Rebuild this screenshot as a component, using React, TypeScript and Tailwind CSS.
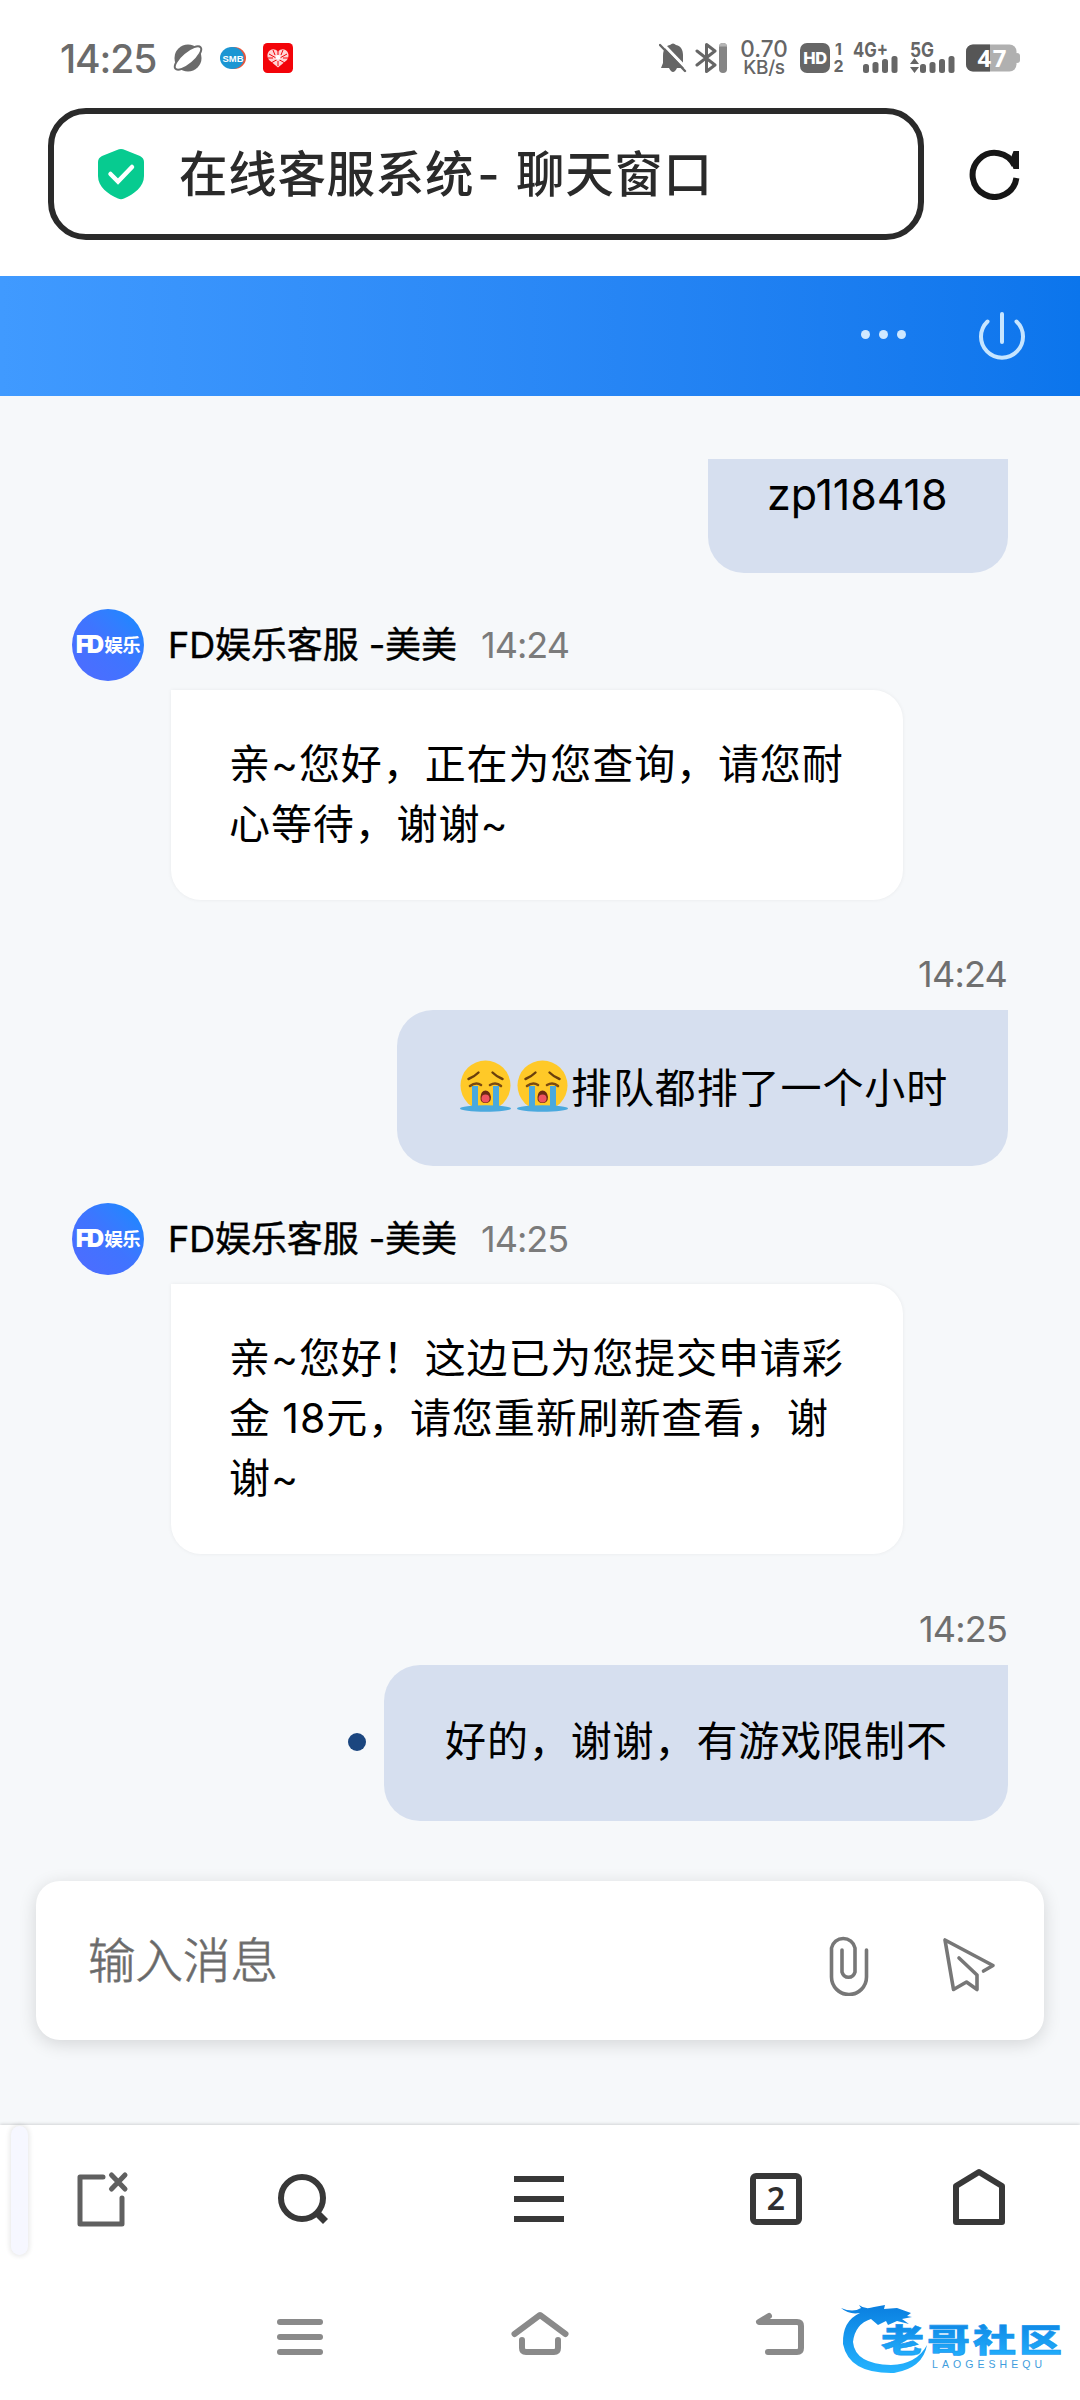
import React from "react";

const Planet = () => (
  <svg className="ml-[17px] h-[30px] w-[32px]" viewBox="0 0 32 30">
    <circle cx="16" cy="15" r="13.5" fill="#6b6b6b" />
    <ellipse cx="16" cy="15" rx="16.5" ry="6.2" fill="#fff" stroke="#6b6b6b" strokeWidth="2" transform="rotate(-40 16 15)" />
  </svg>
);

const AppBadges = () => (
  <svg className="ml-[15px] h-[32px] w-[76px]" viewBox="0 0 76 32">
    <ellipse cx="15" cy="16" rx="12" ry="11" fill="#e8553b" />
    <ellipse cx="13" cy="16" rx="12" ry="11" fill="#1b96d3" />
    <text x="3.5" y="19.5" fontSize="9.5" fontWeight="700" fill="#fff" textLength="21" lengthAdjust="spacingAndGlyphs" fontFamily="Liberation Sans, sans-serif">SMB</text>
    <rect x="44" y="1" width="30" height="30" rx="4.5" fill="#f30309" />
    <path d="M59 25.500 L50 18 C45 11 53 3.500 59 9.500 C65 3.500 73 11 68 18 Z" fill="#ffd4d4" />
    <path d="M50 12 L66 21 M68 12 L52 21 M59 9 V13 M59 19 V24 M54 8 L56 13 M64 8 L62 13 M49 16 H54 M64 16 H69" stroke="#f30309" strokeWidth="1" />
    <circle cx="59" cy="15.5" r="2.5" fill="#fff" />
  </svg>
);

const BellOff = () => (
  <svg className="h-[32px] w-[29px]" viewBox="0 0 29 32">
    <path d="M2 26 L4 21 V14 C4 6 8 3.500 11 3 Q14 0 17 3 C22 4 24 8 24 13 V22 L26 26 H18 Q14 34 10 26 Z" fill="#666" />
    <path d="M3 1 L29 28" stroke="#fff" strokeWidth="3" />
    <path d="M1 3 L26 29" stroke="#666" strokeWidth="2.400" strokeLinecap="round" />
  </svg>
);

const Bluetooth = () => (
  <svg className="ml-[7px] h-[32px] w-[33px]" viewBox="0 0 33 32">
    <path d="M2 9 L20 23 L11.500 29.500 V2.500 L20 9 L2 23" fill="none" stroke="#666" strokeWidth="3" strokeLinejoin="round" strokeLinecap="round" />
    <rect x="24" y="1" width="8" height="30" rx="4" fill="#858585" />
    <path d="M24 4.500 a4 3.500 0 0 1 8 0z" fill="#b5b5b5" />
  </svg>
);

const Signal = ({ label, arrows }: { label: string; arrows?: boolean }) => (
  <svg className="h-[34px] w-[46px] overflow-visible" viewBox="0 0 46 34">
    <text x="0" y="16" fontSize="20" fontWeight="700" fill="#666" textLength={label.length > 2 ? 35 : 24} lengthAdjust="spacingAndGlyphs" fontFamily="Inter, sans-serif">{label}</text>
    <rect x="10" y="23" width="6" height="9" rx="2.500" fill="#666" />
    <rect x="19.500" y="21" width="6" height="11" rx="2.500" fill="#666" />
    <rect x="29" y="18" width="6" height="14" rx="2.500" fill="#666" />
    <rect x="38.500" y="15" width="6" height="17" rx="2.500" fill="#666" />
    {arrows && <path d="M0 23 L4.500 17 L9 23Z M0 26 L4.500 32 L9 26Z" fill="#666" />}
  </svg>
);

const Battery = () => (
  <svg className="ml-[10px] mr-[-1px] h-[28px] w-[55px] overflow-visible" viewBox="0 0 55 28">
    <rect x="48" y="9" width="6" height="10" rx="3" fill="#b0b0b0" />
    <rect x="0" y="0.500" width="50.500" height="27" rx="7" fill="#b0b0b0" />
    <path d="M7 0.500 H24 V27.500 H7 A7 7 0 0 1 0 20.500 V7.500 A7 7 0 0 1 7 0.500Z" fill="#565656" />
    <text x="11.500" y="22.500" fontSize="24" fontWeight="700" fill="#fff" textLength="29" fontFamily="Noto Sans, sans-serif">47</text>
  </svg>
);

const StatusBar = () => (
  <div className="flex h-[108px] items-start justify-between pl-[60px] pr-[60px]">
    <div className="mt-[40px] flex h-[36px] items-center text-[#6b6b6b]">
      <span className="w-[95px] whitespace-nowrap text-[39px] font-medium leading-none tracking-[-1.100px]">14:25</span>
      <Planet />
      <AppBadges />
    </div>
    <div className="mt-[40px] flex h-[36px] items-center text-[#666]">
      <BellOff />
      <Bluetooth />
      <div className="ml-[12px] flex w-[48px] flex-col items-center whitespace-nowrap">
        <span className="text-[22.500px] font-medium leading-[18px]">0.70</span>
        <span className="text-[19px] font-medium leading-[19px] tracking-[-0.300px]">KB/s</span>
      </div>
      <span className="ml-[12px] flex h-[30px] w-[30px] items-center justify-center rounded-[7px] bg-[#666] text-[16.500px] font-extrabold leading-none tracking-[-0.500px] text-white">HD</span>
      <div className="ml-[3px] flex w-[11px] flex-col items-center text-[16px] font-bold leading-[17px]">
        <span>1</span>
        <span>2</span>
      </div>
      <div className="ml-[9px] flex gap-[11px]">
        <Signal label="4G+" />
        <Signal label="5G" arrows />
      </div>
      <Battery />
    </div>
  </div>
);

const AddressBar = () => (
  <div className="flex h-[168px] items-start pl-[48px]">
    <div className="flex h-[132px] w-[876px] items-center rounded-[38px] border-[6px] border-[#2a2a2a] pl-[44px]">
      <svg className="h-[52px] w-[46px]" viewBox="0 0 46 52">
        <path d="M19 2 Q23 0 27 2 L42 8 Q46 10 46 14 V28 C46 39 36 46 26 50.500 Q23 52 20 50.500 C10 46 0 39 0 28 V14 Q0 10 4 8 Z" fill="#07cb90" />
        <path d="M12.500 26 L20 33.500 L34 19" fill="none" stroke="#fff" strokeWidth="4.500" strokeLinecap="round" />
      </svg>
      <span className="ml-[35px] mt-[3px] whitespace-pre text-[48.500px] font-medium leading-none tracking-[0.700px] text-[#2a2a2a]">
        在线客服系统<span className="pl-[3px] pr-[2px]">- </span>聊天窗口
      </span>
    </div>
    <svg className="ml-[45px] mt-[40px] h-[52px] w-[52px]" viewBox="0 0 52 52">
      <path d="M45.500 17.500 A22 22 0 1 0 47.400 30" fill="none" stroke="#161616" strokeWidth="6" />
      <path d="M44.500 3 H50 V21 H44.500 L41 12Z" fill="#161616" />
    </svg>
  </div>
);

const ChatHeader = () => (
  <div className="flex h-[120px] items-center justify-end bg-gradient-to-r from-[#409aff] to-[#0b75ec] pr-[54px]">
    <div className="mr-[71px] mt-[-3px] flex gap-[9px]">
      <i className="h-[9px] w-[9px] rounded-full bg-[#cfe8ff]" />
      <i className="h-[9px] w-[9px] rounded-full bg-[#cfe8ff]" />
      <i className="h-[9px] w-[9px] rounded-full bg-[#cfe8ff]" />
    </div>
    <svg className="mt-[-2px] h-[50px] w-[49px]" viewBox="0 0 49 50" fill="none" stroke="#c6e5ff" strokeWidth="4" strokeLinecap="round">
      <path d="M10.500 11.500 A21 21 0 1 0 39.500 11.500" />
      <path d="M25 4 V32" />
    </svg>
  </div>
);

const Sob = () => (
  <svg className="mt-[-5px] h-[52px] w-[51px] shrink-0" viewBox="0 0 51 52">
    <circle cx="25.500" cy="25.500" r="25" fill="#ffc928" />
    <ellipse cx="25.500" cy="48.500" rx="25.500" ry="3.300" fill="#4aa9de" />
    <path d="M12 26 H18 V47 H12Z M33 26 H39 V47 H33Z" fill="#4aa9de" />
    <path d="M10 26 Q16 21.500 21 25 M30 25 Q36 21.500 41 26" fill="none" stroke="#7a4a10" strokeWidth="2.600" strokeLinecap="round" />
    <path d="M8.500 19 Q14 17 18.500 12.500 M42.500 19 Q37 17 32.500 12.500" fill="none" stroke="#6a3f0c" strokeWidth="2.400" strokeLinecap="round" />
    <path d="M20.500 37 Q21 30.500 25.500 30.500 Q30 30.500 31 37 Q31 43 25.500 43 Q20 43 20.500 37Z" fill="#6d2a12" />
    <circle cx="25.500" cy="38.500" r="4" fill="#ef5360" />
  </svg>
);

const AgentMessage = ({ time, lines }: { time: string; lines: string[] }) => (
  <div>
    <div className="flex h-[72px] items-center">
      <div className="flex h-[72px] w-[72px] items-center justify-center rounded-full bg-gradient-to-tr from-[#4f6bff] via-[#3f74ff] to-[#008cff] text-white">
        <span className="whitespace-nowrap text-[24px] font-black leading-none tracking-[-3px]">FD</span>
        <span className="ml-[3px] whitespace-nowrap text-[18.500px] font-bold leading-none tracking-[-0.500px]">娱乐</span>
      </div>
      <span className="ml-[24px] w-[288px] whitespace-nowrap text-[36px] leading-none tracking-[-0.100px] text-black [-webkit-text-stroke:0.400px_#000]">FD娱乐客服 -美美</span>
      <span className="ml-[25px] text-[36px] leading-none tracking-[-1px] text-[#7b7b7b]">{time}</span>
    </div>
    <div className="ml-[99px] mt-[9px] w-[732px] rounded-[30px] rounded-tl-none bg-white px-[58px] pb-[46px] pt-[44px] shadow-[0_0_4px_rgba(0,0,0,0.060)]">
      {lines.map((line) => (
        <p key={line} className="whitespace-nowrap text-[41px] leading-[60px] tracking-[0.900px] text-black [word-spacing:-1px]">
          {line}
        </p>
      ))}
    </div>
  </div>
);

const Tab = () => (
  <svg className="h-[56px] w-[52px]" viewBox="0 0 52 56" fill="none" stroke="#606060" strokeWidth="5" strokeLinecap="round" strokeLinejoin="round">
    <path d="M26 6 H3 V53 H45 V27" />
    <path d="M34.500 4 L48 18 M48 4 L34.500 18" />
  </svg>
);

const NavBar = () => (
  <div className="relative flex h-[155px] items-start bg-white pl-[77px] pt-[46px] shadow-[0_-1px_3px_rgba(0,0,0,0.150)]">
    <i className="absolute left-[11px] top-[1px] h-[129px] w-[17px] rounded-full bg-[#f6f7ff] shadow-[0_0_4px_2px_rgba(0,0,0,0.080)]" />
    <Tab />
    <svg className="ml-[148px] mt-[2px] h-[54px] w-[54px]" viewBox="0 0 54 54" fill="none" stroke="#383838" strokeWidth="6">
      <circle cx="25" cy="25" r="21" />
      <path d="M39 39 L48.500 48.500" strokeWidth="7" />
    </svg>
    <div className="ml-[183px] mt-[5px] flex w-[50px] flex-col gap-[14px]">
      <i className="h-[6px] bg-[#383838]" />
      <i className="h-[6px] bg-[#383838]" />
      <i className="h-[6px] bg-[#383838]" />
    </div>
    <div className="ml-[186px] mt-[2px] flex h-[52px] w-[52px] items-center justify-center rounded-[6px] border-[6px] border-[#383838] font-['Noto_Sans',sans-serif] text-[32px] font-semibold leading-none text-[#2f2f2f]">
      <span className="mt-[-2px]">2</span>
    </div>
    <svg className="ml-[150px] mt-[-3px] h-[58px] w-[54px]" viewBox="0 0 54 58" fill="none" stroke="#383838" strokeWidth="6" strokeLinejoin="round">
      <path d="M4 18 L27 4 L50 18 V54 H4 Z" />
    </svg>
  </div>
);

const Watermark = () => (
  <svg className="ml-[36px] mt-[22px] h-[76px] w-[224px] overflow-visible" viewBox="0 0 224 76">
    <defs>
      <linearGradient id="wm" x1="0" y1="0" x2="0" y2="1">
        <stop offset="0" stopColor="#0a7fe0" />
        <stop offset="1" stopColor="#25b4ff" />
      </linearGradient>
    </defs>
    <path d="M0 6 Q12 11 20 6 L18 3 Q24 8 33 5 L44 3 L43 7 L56 6 L70 11 L66 14 L71 15 L61 17 L68 22 L56 19 L47 23 L45 19 L37 23 L30 17 Q14 22 12 40 Q14 62 50 63 Q76 62 86 43 Q82 66 53 71 Q8 72 2 42 Q1 19 19 11 Q8 13 0 6Z" fill="url(#wm)" />
    <text x="40" y="0" fontSize="43" fontWeight="900" fill="url(#wm)" textLength="181" lengthAdjust="spacing" stroke="#1495ee" strokeWidth="0.800" fontFamily="Noto Sans CJK SC, sans-serif" transform="translate(0 50) scale(1 0.740)">老哥社区</text>
    <text x="91" y="66" fontSize="10.500" fill="#3e9ddd" textLength="110" fontFamily="Liberation Sans, sans-serif">LAOGESHEQU</text>
  </svg>
);

const SystemNav = () => (
  <div className="relative flex h-[120px] items-start bg-white pl-[277px]">
    <div className="mt-[39px] flex w-[46px] flex-col gap-[9px]">
      <i className="h-[6px] rounded-full bg-[#8a8a8a]" />
      <i className="h-[6px] rounded-full bg-[#8a8a8a]" />
      <i className="h-[6px] rounded-full bg-[#8a8a8a]" />
    </div>
    <svg className="ml-[188px] mt-[31px] h-[45px] w-[58px]" viewBox="0 0 58 45" fill="none" stroke="#8a8a8a" strokeWidth="6" strokeLinecap="round" strokeLinejoin="round">
      <path d="M3.500 23 L29 4 L54.500 23" />
      <path d="M11 29 V37 Q11 41 15 41 H43 Q47 41 47 37 V29" />
    </svg>
    <svg className="ml-[186px] mt-[31px] h-[45px] w-[50px]" viewBox="0 0 50 45" fill="none" stroke="#8a8a8a" strokeWidth="6" strokeLinecap="round" strokeLinejoin="round">
      <path d="M14 5 L4 11 H42 Q46 11 46 15 V37 Q46 41 42 41 H13" />
    </svg>
    <Watermark />
  </div>
);

export default function App() {
  return (
    <div className="flex h-[2400px] w-[1080px] flex-col overflow-hidden bg-white font-['Inter','Noto_Sans_CJK_SC',sans-serif]">
      <StatusBar />
      <AddressBar />
      <ChatHeader />

      <div className="flex h-[1729px] flex-col bg-[#f6f8fa] px-[36px] pt-[63px]">
        <div className="mr-[36px] flex h-[114px] w-[300px] self-end rounded-b-[36px] bg-[#d6dfef] pl-[59px] pt-[7px] text-[43px] leading-[56px] tracking-[-0.100px] text-black">
          zp118418
        </div>

        <div className="mt-[36px] pl-[36px]">
          <AgentMessage time="14:24" lines={["亲~您好，正在为您查询，请您耐", "心等待，谢谢~"]} />
        </div>

        <span className="mr-[37px] mt-[54px] self-end text-[36px] leading-[40px] tracking-[-0.800px] text-[#6f6f6f]">14:24</span>
        <div className="mr-[36px] mt-[16px] flex h-[156px] w-[611px] items-center self-end rounded-[36px] rounded-tr-none bg-[#d6dfef] pl-[63px] text-black">
          <div className="flex gap-[6px]">
            <Sob />
            <Sob />
          </div>
          <span className="ml-[3px] whitespace-nowrap text-[41px] leading-none tracking-[0.900px]">排队都排了一个小时</span>
        </div>

        <div className="mt-[37px] pl-[36px]">
          <AgentMessage time="14:25" lines={["亲~您好！这边已为您提交申请彩", "金 18元，请您重新刷新查看，谢", "谢~"]} />
        </div>

        <span className="mr-[37px] mt-[55px] self-end text-[36px] leading-[40px] tracking-[-0.800px] text-[#6f6f6f]">14:25</span>
        <div className="mr-[36px] mt-[16px] flex items-center self-end">
          <i className="mr-[18px] mt-[-3px] h-[18px] w-[18px] rounded-full bg-[#1b467f]" />
          <div className="flex h-[156px] w-[624px] items-center rounded-[36px] rounded-tr-none bg-[#d6dfef] pb-[3px] pl-[61px] text-[41px] leading-none tracking-[0.900px] text-black">
            好的，谢谢，有游戏限制不
          </div>
        </div>

        <div className="mt-[60px] flex h-[159px] items-center rounded-[24px] bg-white pl-[52px] pr-[48px] shadow-[0_4px_18px_rgba(0,0,0,0.140)]">
          <span className="grow text-[47.500px] font-light leading-none text-[#666] [-webkit-text-stroke:0.800px_#777]">输入消息</span>
          <svg className="mr-[73px] mt-[9px] h-[62px] w-[40px]" viewBox="0 0 40 62" fill="none" stroke="#777" strokeWidth="3.600" strokeLinecap="round">
            <path d="M37.500 16 V43 A17.500 17.500 0 0 1 2.500 43 V14 A12 12 0 0 1 26 14 V38 A6.800 7.500 0 0 1 13 38 V16" />
          </svg>
          <svg className="mt-[9px] h-[56px] w-[54px]" viewBox="0 0 54 56" fill="none" stroke="#777" strokeWidth="3.600" strokeLinecap="round" strokeLinejoin="round">
            <path d="M41.500 34 L51 28.500 L3 3 L11.500 52.500 L24.500 45 L35 52.500 V38 L17 21" />
          </svg>
        </div>
      </div>

      <NavBar />
      <SystemNav />
    </div>
  );
}
